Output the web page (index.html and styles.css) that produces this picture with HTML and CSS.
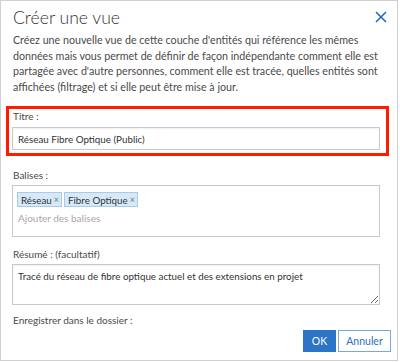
FILE: index.html
```html
<!DOCTYPE html>
<html lang="fr">
<head>
    <meta charset="UTF-8">
    <meta name="viewport" content="width=device-width, initial-scale=1.0">
    <title>Créer une vue</title>
    <link rel="stylesheet" href="styles.css">
</head>
<body>

    <div class="dialog">
        <div class="dialog-header">
            <h2>Créer une vue</h2>
            <button class="close-btn" type="button" aria-label="Fermer">
                <svg width="12" height="12" viewBox="0 0 12 12">
                    <path d="M1 1 L11 11 M11 1 L1 11" stroke="#1d66c4" stroke-width="1.5" fill="none"/>
                </svg>
            </button>
        </div>

        <p class="intro">Créez une nouvelle vue de cette couche d'entités qui référence les mêmes données mais vous permet de définir de façon indépendante comment elle est partagée avec d'autre personnes, comment elle est tracée, quelles entités sont affichées (filtrage) et si elle peut être mise à jour.</p>

        <div class="field highlight">
            <label for="title">Titre :</label>
            <input type="text" id="title" value="Réseau Fibre Optique (Public)">
        </div>

        <div class="field">
            <label>Balises :</label>
            <div class="tag-box">
                <div class="tags">
                    <span class="tag">Réseau <span class="tag-x">×</span></span>
                    <span class="tag">Fibre Optique <span class="tag-x">×</span></span>
                </div>
                <div class="tag-placeholder">Ajouter des balises</div>
            </div>
        </div>

        <div class="field">
            <label for="summary">Résumé : (facultatif)</label>
            <textarea id="summary">Tracé du réseau de fibre optique actuel et des extensions en projet</textarea>
        </div>

        <div class="field folder">
            <label>Enregistrer dans le dossier :</label>
        </div>

        <div class="footer">
            <button class="btn btn-ok" type="button">OK</button>
            <button class="btn btn-cancel" type="button">Annuler</button>
        </div>
    </div>

</body>
</html>
```

FILE: styles.css
```css
* {
    margin: 0;
    padding: 0;
    box-sizing: border-box;
    font-family: 'Lato', 'Noto Sans', sans-serif;
}

body {
    background: white;
}

.dialog {
    width: 398px;
    height: 361px;
    border: 1px solid #d0d0d0;
    padding: 0 6px 0 11px;
    background: white;
    color: #4a4a4a;
}

.dialog-header {
    display: flex;
    justify-content: space-between;
    align-items: center;
    height: 31px;
    padding-top: 2px;
}

h2 {
    font-size: 17.6px;
    font-weight: 300;
    color: #333;
    padding-left: 1px;
}

.close-btn {
    background: none;
    border: none;
    width: 12px;
    height: 12px;
    margin-right: 4px;
    margin-top: -2px;
    cursor: pointer;
    display: flex;
}

.intro {
    font-size: 10.7px;
    line-height: 15.5px;
    padding-left: 1px;
    padding-right: 8px;
}

.field {
    width: 368px;
    margin-top: 10px;
}

.field label {
    display: block;
    font-size: 10px;
    line-height: 14px;
    padding-left: 1px;
    margin-bottom: 3px;
}

.field.highlight {
    width: 383px;
    margin-left: -6px;
    margin-top: 12px;
    border: 3px solid #ff1a00;
    padding: 0 3px 3px 3px;
}

.field.highlight label {
    margin-bottom: 4px;
}

.field.highlight + .field {
    margin-top: 12px;
}

.field.folder {
    margin-top: 8px;
}

input,
textarea {
    display: block;
    width: 368px;
    border: 1px solid #c8c8c8;
    box-shadow: inset 0 1px 2px rgba(0, 0, 0, 0.06);
    font-size: 9.8px;
    color: #333;
    outline: none;
    background: white;
}

input {
    height: 23px;
    padding: 0 5px;
}

textarea {
    height: 41px;
    padding: 4px 5px;
    line-height: 14px;
}

.tag-box {
    height: 52px;
    border: 1px solid #c8c8c8;
    padding: 6px 4px 0 4px;
}

.tags {
    display: flex;
    gap: 2px;
}

.tag {
    display: inline-flex;
    align-items: center;
    height: 15px;
    padding: 0 2px 0 3px;
    background: #d6e9f8;
    border: 1px solid #a9cbe8;
    font-size: 9.8px;
    color: #333;
}

.tag-x {
    font-size: 9px;
    color: #777;
    margin-left: 2px;
}

.tag-placeholder {
    font-size: 10px;
    line-height: 14px;
    margin-top: 4px;
    padding-left: 1px;
    color: #a8a8a8;
}

.footer {
    display: flex;
    justify-content: flex-end;
    gap: 2px;
    margin-top: 3px;
}

.btn {
    height: 22px;
    font-size: 10.5px;
    cursor: pointer;
}

.btn-ok {
    width: 33px;
    background: #2b74c6;
    border: 1px solid #2b74c6;
    color: white;
}

.btn-cancel {
    width: 53px;
    background: white;
    border: 1px solid #78a9dc;
    color: #2b6fbf;
}
```
